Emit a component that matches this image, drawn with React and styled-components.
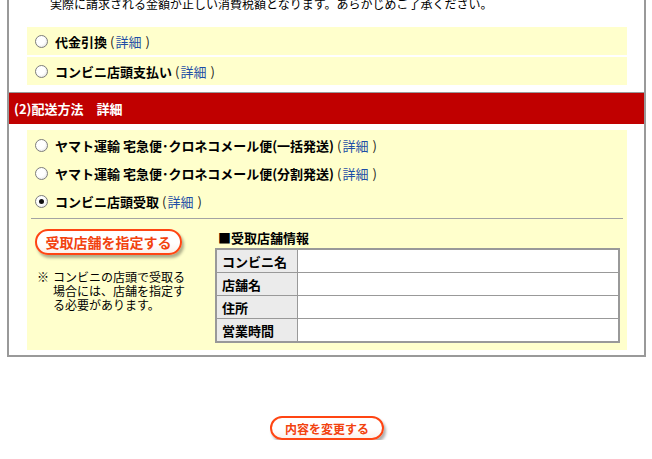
import React from "react";
import styled, { createGlobalStyle } from "styled-components";

const GlobalStyle = createGlobalStyle`
  html, body { margin: 0; padding: 0; background: #fff; }
  body {
    font-family: "Noto Sans CJK JP", "Noto Sans", sans-serif;
    color: #000;
    overflow: hidden;
  }
`;

const Page = styled.div`
  width: 639px;
  margin-left: 7px;
  margin-top: -3px;
`;

const Panel = styled.div`
  border: 2px solid #999;
  border-top: none;
  padding-bottom: 5px;
`;

const Notice = styled.p`
  margin: 0;
  padding-left: 41px;
  font-size: 12px;
  line-height: 14px;
  height: 14px;
  white-space: nowrap;
`;

const OptionList = styled.div`
  display: flex;
  flex-direction: column;
  gap: 2px;
  margin: 16px 17px 0 18px;
`;

const OptionRow = styled.label`
  display: flex;
  align-items: center;
  gap: 7px;
  height: 28px;
  padding-left: 8px;
  background: ${(p) => (p.$shaded ? "#ffffcc" : "transparent")};
  font-size: 13px;
  font-weight: bold;
  white-space: nowrap;
`;

const Radio = styled.span`
  flex: none;
  display: inline-flex;
  align-items: center;
  justify-content: center;
  box-sizing: border-box;
  width: 13px;
  height: 13px;
  border-radius: 50%;
  border: 1px solid #7d7d7d;
  background: radial-gradient(circle at 40% 40%, #ffffff 45%, #d9d9d9 100%);
  &::after {
    content: "";
    display: ${(p) => (p.$checked ? "block" : "none")};
    width: 5px;
    height: 5px;
    border-radius: 50%;
    background: #111;
  }
`;

const Detail = styled.span`
  font-weight: normal;
  color: #222;
  margin-left: 3px;
`;

const DetailLink = styled.a`
  color: #1e4ea6;
  text-decoration: none;
  margin: 0 4px 0 1px;
`;

const SectionHeader = styled.h2`
  margin: 7px 0 0;
  border-top: 1px solid #999;
  height: 31px;
  display: flex;
  align-items: center;
  padding-left: 5px;
  background: #c00000;
  color: #fff;
  font-size: 13px;
  font-weight: bold;
  white-space: pre;
`;

const ShippingBox = styled.div`
  margin: 6px 17px 0 18px;
  padding: 1px 0 7px;
  background: #ffffcc;
`;

const Rule = styled.hr`
  border: none;
  height: 1px;
  background: #a3a3a3;
  margin: 3px 4px 0;
`;

const StoreArea = styled.div`
  display: flex;
  padding-top: 10px;
`;

const StoreSide = styled.div`
  box-sizing: border-box;
  width: 188px;
  padding-left: 8px;
`;

const StoreInfo = styled.div`
  width: 405px;
`;

const PillButton = styled.button`
  display: inline-flex;
  align-items: center;
  justify-content: center;
  box-sizing: border-box;
  width: ${(p) => p.$w}px;
  height: ${(p) => p.$h}px;
  padding: 0;
  border: 2px solid #ff4513;
  border-radius: 999px;
  background: linear-gradient(#ffffff, #ffffff 55%, #fbf1ec);
  box-shadow: 2px 3px 3px rgba(0, 0, 0, 0.32);
  color: #f2420f;
  font-family: "Noto Sans CJK JP", "Noto Sans", sans-serif;
  font-size: ${(p) => p.$fs}px;
  font-weight: bold;
  cursor: pointer;
`;

const Note = styled.div`
  display: flex;
  margin-top: 15px;
  padding-left: 2px;
  font-size: 12px;
  line-height: 14px;
`;

const NoteMark = styled.span`
  flex: none;
  width: 16px;
`;

const NoteBody = styled.span`
  white-space: nowrap;
`;

const InfoTitle = styled.h3`
  margin: 0 0 1px 3px;
  height: 18px;
  line-height: 18px;
  font-size: 13px;
  font-weight: bold;
`;

const InfoTable = styled.table`
  box-sizing: border-box;
  width: 405px;
  border: 2px solid #999;
  border-spacing: 0;
  background: #fff;
`;

const InfoLabel = styled.th`
  box-sizing: border-box;
  width: 81px;
  height: ${(p) => (p.$last ? 22 : 23)}px;
  padding: 0 0 0 5px;
  text-align: left;
  background: #ebebeb;
  border-right: 1px solid #999;
  border-bottom: ${(p) => (p.$last ? "none" : "1px solid #999")};
  font-size: 13px;
  font-weight: bold;
`;

const InfoValue = styled.td`
  padding: 0;
  border-bottom: ${(p) => (p.$last ? "none" : "1px solid #999")};
`;

const Footer = styled.div`
  margin-top: 59px;
  display: flex;
  justify-content: center;
  padding-left: 1px;
`;

const paymentOptions = ["代金引換", "コンビニ店頭支払い"];

const shippingOptions = [
  { label: "ヤマト運輸 宅急便･クロネコメール便(一括発送)", checked: false },
  { label: "ヤマト運輸 宅急便･クロネコメール便(分割発送)", checked: false },
  { label: "コンビニ店頭受取", checked: true },
];

const storeFields = ["コンビニ名", "店舗名", "住所", "営業時間"];

function Option({ label, checked, shaded }) {
  return (
    <OptionRow $shaded={shaded}>
      <Radio $checked={checked} />
      <span>
        {label}
        <Detail>
          (<DetailLink href="#">詳細</DetailLink>)
        </Detail>
      </span>
    </OptionRow>
  );
}

export default function App() {
  return (
    <>
      <GlobalStyle />
      <Page>
        <Panel>
          <Notice>
            実際に請求される金額が正しい消費税額となります。あらかじめご了承ください。
          </Notice>
          <OptionList>
            {paymentOptions.map((o) => (
              <Option key={o} label={o} shaded />
            ))}
          </OptionList>

          <SectionHeader>(2)配送方法　詳細</SectionHeader>

          <ShippingBox>
            {shippingOptions.map((o) => (
              <Option key={o.label} label={o.label} checked={o.checked} />
            ))}
            <Rule />
            <StoreArea>
              <StoreSide>
                <PillButton $w={147} $h={26} $fs={14}>
                  受取店舗を指定する
                </PillButton>
                <Note>
                  <NoteMark>※</NoteMark>
                  <NoteBody>
                    コンビニの店頭で受取る
                    <br />
                    場合には、店舗を指定す
                    <br />
                    る必要があります。
                  </NoteBody>
                </Note>
              </StoreSide>
              <StoreInfo>
                <InfoTitle>■受取店舗情報</InfoTitle>
                <InfoTable>
                  <tbody>
                    {storeFields.map((f, i) => {
                      const last = i === storeFields.length - 1;
                      return (
                        <tr key={f}>
                          <InfoLabel $last={last}>{f}</InfoLabel>
                          <InfoValue $last={last} />
                        </tr>
                      );
                    })}
                  </tbody>
                </InfoTable>
              </StoreInfo>
            </StoreArea>
          </ShippingBox>
        </Panel>
        <Footer>
          <PillButton $w={114} $h={24} $fs={12}>
            内容を変更する
          </PillButton>
        </Footer>
      </Page>
    </>
  );
}
